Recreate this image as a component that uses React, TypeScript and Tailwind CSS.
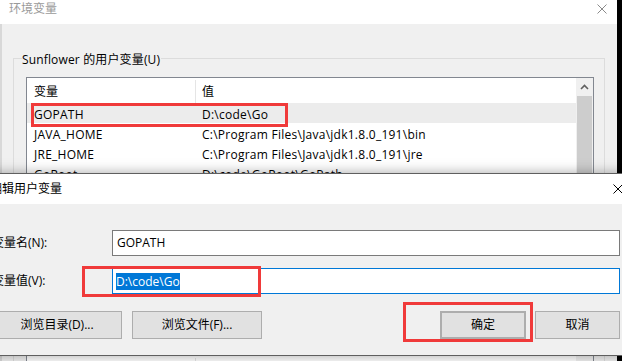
import React from 'react';

const rowsUser = [
  { name: 'GOPATH', value: 'D:\\code\\Go', selected: true },
  { name: 'JAVA_HOME', value: 'C:\\Program Files\\Java\\jdk1.8.0_191\\bin' },
  { name: 'JRE_HOME', value: 'C:\\Program Files\\Java\\jdk1.8.0_191\\jre' },
  { name: 'GoRoot', value: 'D:\\code\\GoRoot\\GoPath' },
];

function CloseIcon({ className }: { className?: string }) {
  return (
    <svg width="10" height="10" viewBox="0 0 10 10" className={className}>
      <path d="M0.5 0.5 L9.5 9.5 M9.5 0.5 L0.5 9.5" stroke="currentColor" strokeWidth="1" fill="none" />
    </svg>
  );
}

function ListBox({ rows, height }: { rows: typeof rowsUser; height: string }) {
  return (
    <div className={`flex w-[568px] border border-[#828790] bg-white ${height}`}>
      <div className="flex-1 flex flex-col overflow-hidden">
        {/* header */}
        <div className="flex h-[25px] shrink-0 pt-[2px]">
          <div className="w-[169px] border-r border-[#e5e5e5] pl-[7px] flex items-center">变量</div>
          <div className="flex-1 pl-[6px] flex items-center">值</div>
        </div>
        {rows.map((r) => (
          <div key={r.name} className={`flex h-[20px] shrink-0 items-center pt-[4px] tracking-[0.25px] ${r.selected ? 'bg-[#ececec]' : ''}`}>
            <div className="w-[169px] pl-[7px] whitespace-nowrap">{r.name}</div>
            <div className="flex-1 pl-[6px] whitespace-nowrap">{r.value}</div>
          </div>
        ))}
      </div>
      <div className="w-[17px] bg-[#f0f0f0] flex flex-col">
        <div className="h-[18px] flex items-center justify-center">
          <svg width="9" height="6" viewBox="0 0 9 6">
            <path d="M1 5 L4.5 1.5 L8 5" stroke="#606060" strokeWidth="1.6" fill="none" />
          </svg>
        </div>
        <div className="flex-1 mx-[1px] bg-[#cdcdcd]" />
      </div>
    </div>
  );
}

function GroupBox({ label, children, className }: { label?: string; children: React.ReactNode; className?: string }) {
  return (
    <div className={`relative border border-[#dcdcdc] pt-[18px] pl-[12px] pb-[10px] ${className ?? ''}`}>
      {label && (
        <span className="absolute left-[8px] top-[-8px] leading-[18px] bg-[#f0f0f0] pr-[1px] tracking-[0.15px]">{label}</span>
      )}
      {children}
    </div>
  );
}

function BackWindow() {
  return (
    <div className="w-[617px] h-full flex flex-col">
      <div className="mt-[-6px] h-[30px] shrink-0 bg-white flex items-center justify-between pl-[9px] pr-[10px]">
        <span className="text-[#9a9a9a]">环境变量</span>
        <CloseIcon className="text-[#8a8a8a]" />
      </div>
      <div className="flex-1 bg-[#f0f0f0] border-l-2 border-[#d8d8d8] pl-[11px] pr-[12px] pt-[34px]">
        <GroupBox label="Sunflower 的用户变量(U)">
          <ListBox rows={rowsUser} height="h-[180px]" />
          {/* button row, hidden behind the dialog */}
          <div className="h-[23px] mt-[9px]" />
        </GroupBox>
        {/* system variables group, only its list header peeks out below the dialog */}
        <GroupBox className="mt-[36px]">
          <ListBox rows={[]} height="h-[150px]" />
        </GroupBox>
      </div>
    </div>
  );
}

function Button({ children, className }: { children: React.ReactNode; className?: string }) {
  return (
    <div className={`h-[28px] bg-[#e1e1e1] border border-[#adadad] flex items-center justify-center ${className ?? ''}`}>
      {children}
    </div>
  );
}

function EditDialog() {
  return (
    <div className="absolute left-[-20px] top-[173px] w-[652px] border border-[#5f5f5f] bg-[#f0f0f0] shadow-[0_0_12px_rgba(0,0,0,0.35)]">
      <div className="h-[30px] bg-white flex items-center justify-between pl-[9px] pr-[8px]">
        <span>编辑用户变量</span>
        <CloseIcon className="text-black" />
      </div>
      <div className="pl-[11px] pr-[11px] pt-[26px] pb-[16px] flex flex-col">
        <div className="flex h-[26px] items-center">
          <div className="w-[120px]">变量名(N):</div>
          <div className="flex-1 h-full border border-[#7a7a7a] bg-white pl-[4px] flex items-center">GOPATH</div>
        </div>
        <div className="flex h-[26px] items-center mt-[12px]">
          <div className="w-[120px]">变量值(V):</div>
          <div className="flex-1 h-full border border-[#0078d7] bg-white pl-[3px] flex items-center">
            <span className="bg-[#0078d7] text-white leading-[17px]">D:\code\Go</span>
          </div>
        </div>
        <div className="flex mt-[17px] gap-[10px]">
          <Button className="w-[130px]">浏览目录(D)...</Button>
          <Button className="w-[130px]">浏览文件(F)...</Button>
          <Button className="w-[86px] ml-auto border-2 border-[#0078d7]">确定</Button>
          <Button className="w-[85px] ml-[-1px]">取消</Button>
        </div>
      </div>
    </div>
  );
}

export default function App() {
  return (
    <div className="relative w-[622px] h-[361px] overflow-hidden bg-black text-[12px] text-black font-['Open_Sans','Noto_Sans_CJK_SC',sans-serif]">
      <BackWindow />
      <EditDialog />
      {/* red annotation boxes */}
      <div className="absolute left-[31px] top-[103px] w-[257px] h-[24px] border-[3px] border-[#f03a3a]" />
      <div className="absolute left-[82px] top-[266px] w-[179px] h-[31px] border-[3px] border-[#f03a3a]" />
      <div className="absolute left-[403px] top-[302px] w-[130px] h-[40px] border-[3px] border-[#f03a3a]" />
    </div>
  );
}
